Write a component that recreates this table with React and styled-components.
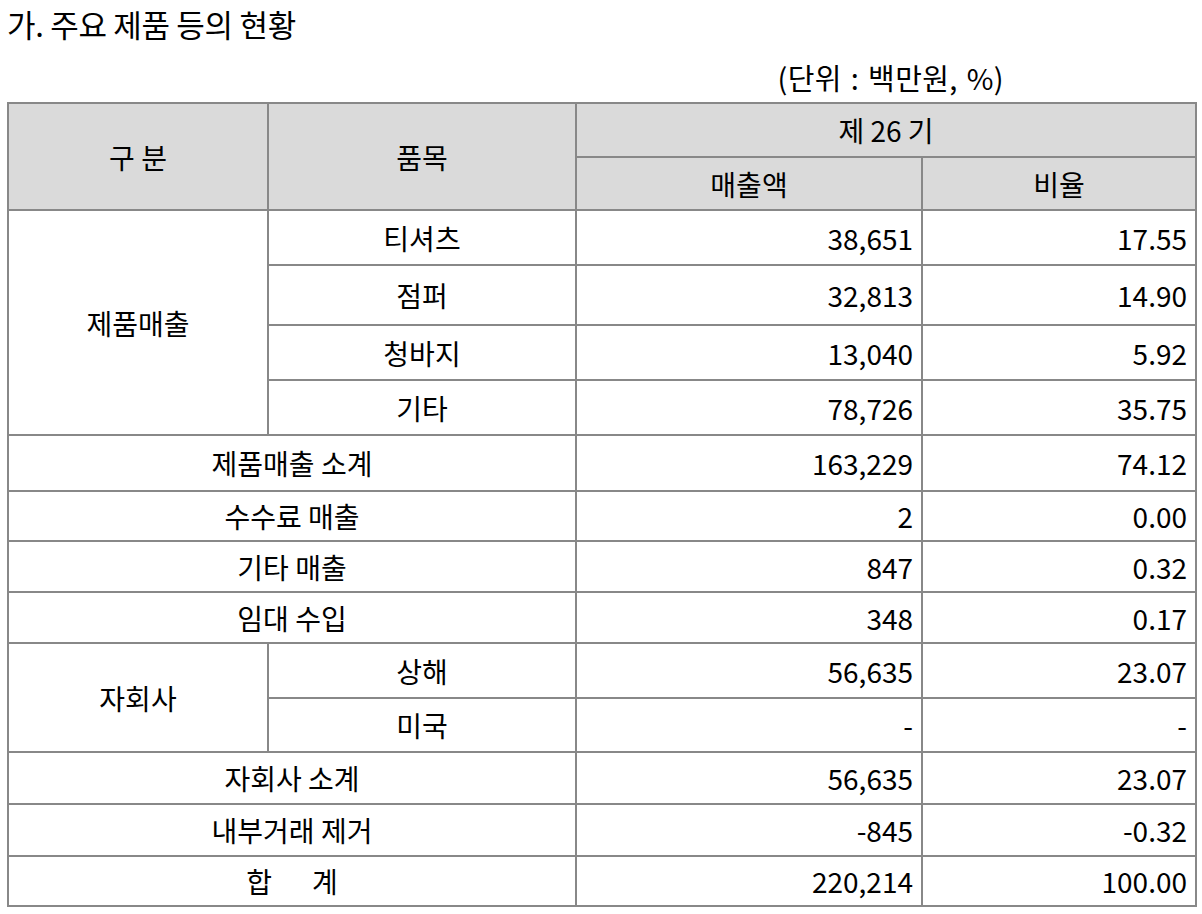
import React from "react";
import styled, { createGlobalStyle } from "styled-components";

const Global = createGlobalStyle`
  html, body {
    margin: 0;
    padding: 0;
    background: #ffffff;
  }
  body {
    font-family: "Noto Sans CJK KR", "Noto Sans", sans-serif;
    color: #000;
  }
`;

const Page = styled.div`
  width: 1202px;
  padding: 4px 0 0 0;
  box-sizing: border-box;
`;

const Title = styled.h3`
  margin: 0;
  padding-left: 7px;
  font-size: 31px;
  font-weight: 400;
  line-height: 40px;
  letter-spacing: -0.3px;
`;

const UnitRow = styled.div`
  display: flex;
  justify-content: flex-end;
  padding-right: 198px;
  margin-top: 8px;
  height: 50px;
  align-items: center;
`;

const Unit = styled.span`
  font-size: 29px;
  line-height: 32px;
  letter-spacing: 0.4px;
  word-spacing: 2px;
`;

const Table = styled.table`
  margin-left: 7px;
  width: 1188px;
  border-collapse: collapse;
  table-layout: fixed;
  border: 2px solid #000;
  font-size: 28px;
`;

const Col = styled.col`
  width: ${(p) => p.$w}px;
`;

const Row = styled.tr`
  height: ${(p) => p.$h}px;
`;

const Th = styled.th`
  background: #dadada;
  border: 2px solid #888;
  font-weight: 400;
  text-align: center;
  vertical-align: middle;
  padding: 0 8px;
  line-height: 30px;
`;

const Td = styled.td`
  border: 2px solid #888;
  text-align: ${(p) => (p.$num ? "right" : "center")};
  vertical-align: middle;
  padding: 0 8px;
  line-height: 30px;
  white-space: nowrap;
`;

const Spread = styled.span`
  display: inline-flex;
  gap: ${(p) => p.$gap}px;
`;

const products = [
  { name: "티셔츠", amt: "38,651", pct: "17.55", h: 55 },
  { name: "점퍼", amt: "32,813", pct: "14.90", h: 60 },
  { name: "청바지", amt: "13,040", pct: "5.92", h: 55 },
  { name: "기타", amt: "78,726", pct: "35.75", h: 55 },
];

export default function App() {
  return (
    <Page>
      <Global />
      <Title>가. 주요 제품 등의 현황</Title>
      <UnitRow>
        <Unit>(단위 : 백만원, %)</Unit>
      </UnitRow>
      <Table>
        <colgroup>
          <Col $w={260} />
          <Col $w={308} />
          <Col $w={346} />
          <Col $w={274} />
        </colgroup>
        <thead>
          <Row $h={54}>
            <Th rowSpan={2}>구 분</Th>
            <Th rowSpan={2}>품목</Th>
            <Th colSpan={2}>제 26 기</Th>
          </Row>
          <Row $h={53}>
            <Th>매출액</Th>
            <Th>비율</Th>
          </Row>
        </thead>
        <tbody>
          {products.map((p, i) => (
            <Row key={p.name} $h={p.h}>
              {i === 0 && <Td rowSpan={4}>제품매출</Td>}
              <Td>{p.name}</Td>
              <Td $num>{p.amt}</Td>
              <Td $num>{p.pct}</Td>
            </Row>
          ))}
          <Row $h={56}>
            <Td colSpan={2}>제품매출 소계</Td>
            <Td $num>163,229</Td>
            <Td $num>74.12</Td>
          </Row>
          <Row $h={50}>
            <Td colSpan={2}>수수료 매출</Td>
            <Td $num>2</Td>
            <Td $num>0.00</Td>
          </Row>
          <Row $h={51}>
            <Td colSpan={2}>기타 매출</Td>
            <Td $num>847</Td>
            <Td $num>0.32</Td>
          </Row>
          <Row $h={51}>
            <Td colSpan={2}>임대 수입</Td>
            <Td $num>348</Td>
            <Td $num>0.17</Td>
          </Row>
          <Row $h={55}>
            <Td rowSpan={2}>자회사</Td>
            <Td>상해</Td>
            <Td $num>56,635</Td>
            <Td $num>23.07</Td>
          </Row>
          <Row $h={54}>
            <Td>미국</Td>
            <Td $num>-</Td>
            <Td $num>-</Td>
          </Row>
          <Row $h={52}>
            <Td colSpan={2}>자회사 소계</Td>
            <Td $num>56,635</Td>
            <Td $num>23.07</Td>
          </Row>
          <Row $h={52}>
            <Td colSpan={2}>내부거래 제거</Td>
            <Td $num>-845</Td>
            <Td $num>-0.32</Td>
          </Row>
          <Row $h={50}>
            <Td colSpan={2}>
              <Spread $gap={40}>
                <span>합</span>
                <span>계</span>
              </Spread>
            </Td>
            <Td $num>220,214</Td>
            <Td $num>100.00</Td>
          </Row>
        </tbody>
      </Table>
    </Page>
  );
}
